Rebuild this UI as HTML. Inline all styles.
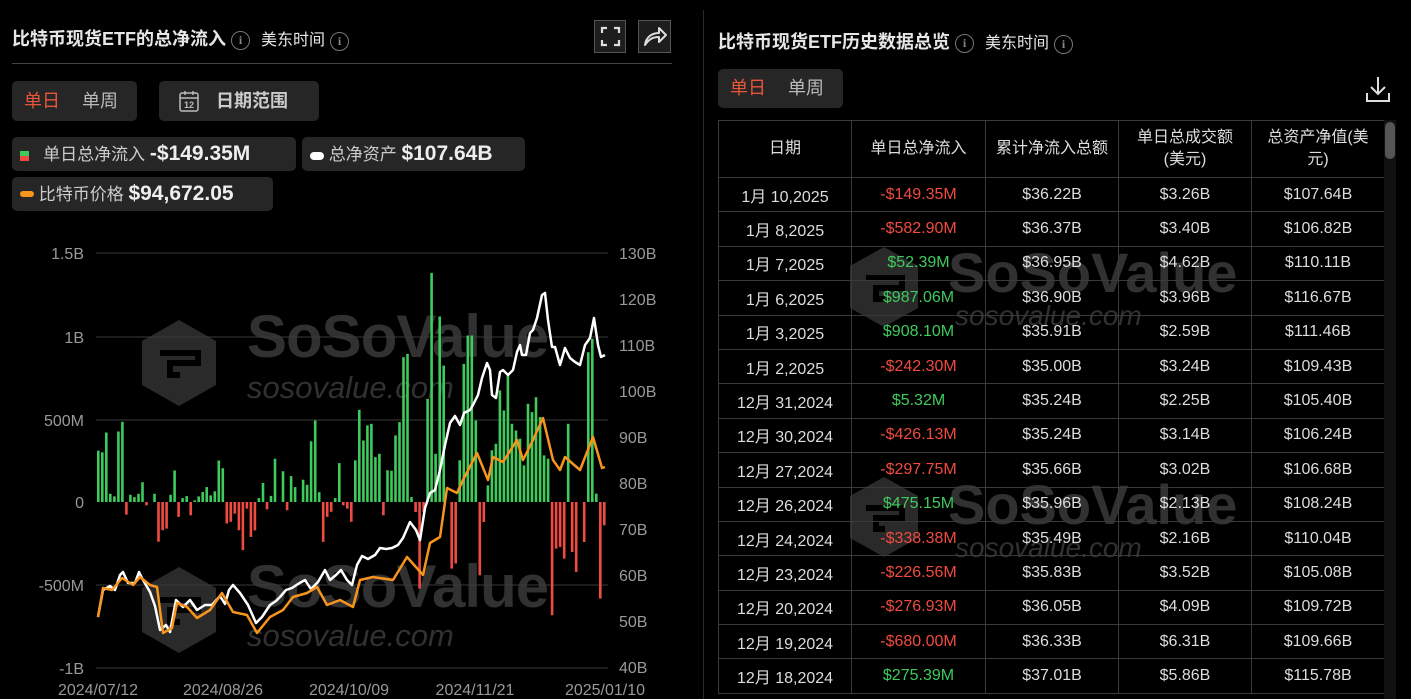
<!DOCTYPE html>
<html><head><meta charset="utf-8">
<style>
*{margin:0;padding:0;box-sizing:border-box}
body{width:1411px;height:699px;background:#000;overflow:hidden;position:relative;font-family:"Liberation Sans","Noto Sans CJK SC",sans-serif;color:#ddd}
.a{position:absolute}
.t{font-size:18px;font-weight:bold;color:#e6e6e6;white-space:nowrap}
.s{font-size:16px;color:#e6e6e6;white-space:nowrap}
.i{display:inline-block;width:19px;height:19px;border:1.5px solid #777;border-radius:50%;color:#888;font-size:12px;text-align:center;line-height:16px;font-family:"Liberation Serif",serif}
.box{background:#262626;border-radius:5px}
.chip{background:#262626;border-radius:5px;height:34px;font-size:17px;color:#ccc;white-space:nowrap;line-height:34px;padding:0 8px}
.chip b{color:#eee;font-size:21px}
table{border-collapse:collapse;position:absolute;left:718px;top:120px;width:667px;font-size:16px;color:#ddd}
td{border:1px solid #3a3a3a;text-align:center;height:34.4px;white-space:nowrap}
tr:first-child td{height:57px;line-height:22px}
.r{color:#ef4b40}.g{color:#3fca5c}
.wm{position:absolute;color:rgba(90,90,90,.55);font-weight:bold;white-space:nowrap}
</style></head><body>
<div class="a t" style="left:12px;top:25px">比特币现货ETF的总净流入 <span class="i" style="vertical-align:1px">i</span> <span class="s" style="font-weight:normal;margin-left:6px">美东时间</span> <span class="i">i</span></div>
<div class="a" style="left:594px;top:20px;width:32px;height:33px;border:1px solid #555;background:#1d1d1d"><svg width="30" height="31"><path d="M7 12V7h5M19 7h5v5M24 19v5h-5M12 24H7v-5" stroke="#ddd" stroke-width="2.2" fill="none"/></svg></div>
<div class="a" style="left:638px;top:20px;width:33px;height:33px;border:1px solid #555;background:#1d1d1d"><svg width="31" height="31"><path d="M6 24c1-8 7-12 14-12V7l7 7-7 7v-5c-6 0-10 2-14 8z" stroke="#ddd" stroke-width="2" fill="none" stroke-linejoin="round"/></svg></div>
<div class="a" style="left:12px;top:63px;width:660px;height:1px;background:#444"></div>
<div class="a" style="left:703px;top:10px;width:1px;height:689px;background:#2a2a2a"></div>
<div class="a box" style="left:12px;top:81px;width:125px;height:40px;font-size:18px;line-height:40px"><span style="color:#e8553a;margin-left:12px">单日</span><span style="color:#bbb;margin-left:22px">单周</span></div>
<div class="a box" style="left:159px;top:81px;width:160px;height:40px;font-size:18px;line-height:40px;font-weight:bold;color:#ccc"><svg class="a" style="left:19px;top:9px" width="22" height="22"><rect x="2" y="3" width="18" height="18" rx="2" stroke="#bbb" stroke-width="1.5" fill="none"/><path d="M2 8h18M7 1v4M15 1v4" stroke="#bbb" stroke-width="1.5"/><text x="11" y="18" font-size="9" fill="#bbb" text-anchor="middle">12</text></svg><span style="margin-left:57px">日期范围</span></div>
<div class="a chip" style="left:12px;top:137px;width:284px"><span style="display:inline-block;width:9px;height:10px;background:linear-gradient(#3fca5c 50%,#ef4b40 50%);vertical-align:-1px"></span>&nbsp;&nbsp; 单日总净流入 <b>-$149.35M</b></div>
<div class="a chip" style="left:302px;top:137px;width:223px"><span style="display:inline-block;width:14px;height:8px;background:#fff;border-radius:4px"></span> 总净资产 <b>$107.64B</b></div>
<div class="a chip" style="left:12px;top:177px;width:261px"><span style="display:inline-block;width:14px;height:6px;background:#f7941d;border-radius:3px;vertical-align:3px"></span> 比特币价格 <b>$94,672.05</b></div>
<div class="wm" style="left:140px;top:318px"><svg width="78" height="90"><path d="M39 2 76 23v44L39 88 2 67V23z" fill="rgba(70,70,70,.6)"/><path d="M20 35h38v10H30v12h10" stroke="#000" stroke-width="6" fill="none"/></svg></div>
<div class="wm" style="left:247px;top:302px;font-size:60px;letter-spacing:-1px">SoSoValue</div>
<div class="wm" style="left:247px;top:370px;font-size:31px;font-weight:normal;font-style:italic">sosovalue.com</div>
<div class="wm" style="left:140px;top:565px"><svg width="78" height="90"><path d="M39 2 76 23v44L39 88 2 67V23z" fill="rgba(70,70,70,.6)"/><path d="M20 35h38v10H30v12h10" stroke="#000" stroke-width="6" fill="none"/></svg></div>
<div class="wm" style="left:247px;top:552px;font-size:60px;letter-spacing:-1px">SoSoValue</div>
<div class="wm" style="left:247px;top:618px;font-size:31px;font-weight:normal;font-style:italic">sosovalue.com</div>
<svg class="a" style="left:0;top:0" width="700" height="699">
<g stroke="#3a3a3a" stroke-width="1"><line x1="96" x2="608" y1="253" y2="253"/><line x1="96" x2="608" y1="337" y2="337"/><line x1="96" x2="608" y1="420" y2="420"/><line x1="96" x2="608" y1="585" y2="585"/><line x1="96" x2="608" y1="668" y2="668"/></g>
<g fill="#999" font-size="16" font-family="Liberation Sans" text-anchor="end"><text x="84" y="259">1.5B</text><text x="84" y="343">1B</text><text x="84" y="426">500M</text><text x="84" y="508">0</text><text x="84" y="591">-500M</text><text x="84" y="674">-1B</text></g>
<g fill="#999" font-size="16" font-family="Liberation Sans"><text x="619" y="259">130B</text><text x="619" y="305">120B</text><text x="619" y="351">110B</text><text x="619" y="397">100B</text><text x="619" y="443">90B</text><text x="619" y="489">80B</text><text x="619" y="535">70B</text><text x="619" y="581">60B</text><text x="619" y="627">50B</text><text x="619" y="673">40B</text></g>
<g fill="#999" font-size="16" font-family="Liberation Sans" text-anchor="middle"><text x="98" y="695">2024/07/12</text><text x="223" y="695">2024/08/26</text><text x="349" y="695">2024/10/09</text><text x="475" y="695">2024/11/21</text><text x="605" y="695">2025/01/10</text></g>
<g id="bars"></g>
<polyline id="wl" fill="none" stroke="#fff" stroke-width="2.5" stroke-linejoin="round"/>
<polyline id="ol" fill="none" stroke="#f7941d" stroke-width="2.5" stroke-linejoin="round"/>
</svg>
<script>
var v=[313,303,424,50,34,430,489,-77,44,30,50,121,-20,0,50,-242,-172,-162,44,192,-91,24,36,-81,10,34,61,91,40,65,253,206,-131,-121,-71,-172,-293,-40,
-213,-173,24,116,-45,37,264,0,187,-50,158,91,0,136,105,370,497,60,-243,-91,-60,24,237,-20,-40,-121,254,562,375,467,477,274,294,-81,193,191,406,487,883,903,30,-61,-528,-60,629,1397,294,1131,832,
0,-406,-375,254,842,1015,1015,497,-447,-122,101,315,355,680,558,771,477,436,386,223,599,548,639,518,284,264,-690,-284,-274,-345,477,-305,-426,0,-244,913,995,51,-589,-142];
var n=v.length,x0=97,w=4.016,s="",k=82/500;
for(var i=0;i<n;i++){var h=v[i]*k;if(!h)continue;var x=x0+i*w;s+='<rect x="'+x.toFixed(1)+'" width="2.6" y="'+(h>0?502-h:502).toFixed(1)+'" height="'+Math.abs(h).toFixed(1)+'" fill="'+(h>0?'#3fca5c':'#ef4b40')+'"/>';}
document.getElementById('bars').innerHTML=s;
document.getElementById('wl').setAttribute('points',"98,617 103,590 110,586 115,590 120,575 123,572 128,583 135,583 139,572 143,580 150,592 155,606 160,630 166,625 170,632 176,600 183,607 190,600 197,610 205,605 212,605 220,596 225,604 229,590 233,585 240,593 248,605 256,623 262,617 270,605 276,601 280,597 286,590 292,588 298,584 305,580 311,589 318,582 325,570 330,580 336,575 341,570 347,580 352,585 357,565 362,556 368,559 375,555 380,548 386,549 392,548 398,545 403,538 410,522 416,530 420,540 425,508 430,493 435,490 440,470 445,445 450,423 455,416 460,425 464,413 470,410 473,405 478,395 482,378 487,363 490,370 492,395 496,398 500,372 503,370 508,375 513,370 517,352 520,345 522,355 526,355 530,333 533,330 537,318 542,295 545,293 548,320 552,347 555,347 560,365 565,348 570,358 575,362 580,365 585,345 590,338 594,318 598,345 601,357 605,355");
document.getElementById('ol').setAttribute('points',"98,617 103,588 112,590 122,578 133,585 140,577 150,585 157,587 163,633 172,628 177,603 187,607 197,618 210,610 222,593 233,612 247,615 257,633 270,617 283,610 293,597 307,593 317,587 327,605 340,600 353,607 360,580 373,577 393,580 407,557 423,575 430,543 440,537 447,488 457,493 463,480 477,453 488,480 493,457 503,462 517,440 523,460 533,440 543,418 553,460 560,470 565,457 580,470 593,437 602,468 605,467");
</script>
<div class="a t" style="left:718px;top:28px">比特币现货ETF历史数据总览 <span class="i" style="vertical-align:1px">i</span> <span class="s" style="font-weight:normal;margin-left:6px">美东时间</span> <span class="i">i</span></div>
<div class="a box" style="left:718px;top:69px;width:125px;height:39px;font-size:18px;line-height:39px"><span style="color:#e8553a;margin-left:12px">单日</span><span style="color:#bbb;margin-left:22px">单周</span></div>
<svg class="a" style="left:1364px;top:75px" width="28" height="28"><path d="M14 2v17M7 12l7 7 7-7M3 18v8h22v-8" stroke="#ddd" stroke-width="2" fill="none"/></svg>
<div class="wm" style="left:848px;top:245px"><svg width="72" height="84"><path d="M36 2 70 21v42L36 82 2 63V21z" fill="rgba(70,70,70,.6)"/><path d="M18 33h36v10H28v11h9" stroke="#000" stroke-width="6" fill="none"/></svg></div>
<div class="wm" style="left:948px;top:240px;font-size:56px">SoSoValue</div>
<div class="wm" style="left:955px;top:300px;font-size:28px;font-weight:normal;font-style:italic">sosovalue.com</div>
<div class="wm" style="left:848px;top:475px"><svg width="72" height="84"><path d="M36 2 70 21v42L36 82 2 63V21z" fill="rgba(70,70,70,.6)"/><path d="M18 33h36v10H28v11h9" stroke="#000" stroke-width="6" fill="none"/></svg></div>
<div class="wm" style="left:948px;top:472px;font-size:56px">SoSoValue</div>
<div class="wm" style="left:955px;top:532px;font-size:28px;font-weight:normal;font-style:italic">sosovalue.com</div>
<table>
<tr><td style="width:133px">日期</td><td style="width:134px">单日总净流入</td><td style="width:133px">累计净流入总额</td><td style="width:133px">单日总成交额<br>(美元)</td><td>总资产净值(美<br>元)</td></tr>
<tr><td>1月 10,2025</td><td class="r">-$149.35M</td><td>$36.22B</td><td>$3.26B</td><td>$107.64B</td></tr>
<tr><td>1月 8,2025</td><td class="r">-$582.90M</td><td>$36.37B</td><td>$3.40B</td><td>$106.82B</td></tr>
<tr><td>1月 7,2025</td><td class="g">$52.39M</td><td>$36.95B</td><td>$4.62B</td><td>$110.11B</td></tr>
<tr><td>1月 6,2025</td><td class="g">$987.06M</td><td>$36.90B</td><td>$3.96B</td><td>$116.67B</td></tr>
<tr><td>1月 3,2025</td><td class="g">$908.10M</td><td>$35.91B</td><td>$2.59B</td><td>$111.46B</td></tr>
<tr><td>1月 2,2025</td><td class="r">-$242.30M</td><td>$35.00B</td><td>$3.24B</td><td>$109.43B</td></tr>
<tr><td>12月 31,2024</td><td class="g">$5.32M</td><td>$35.24B</td><td>$2.25B</td><td>$105.40B</td></tr>
<tr><td>12月 30,2024</td><td class="r">-$426.13M</td><td>$35.24B</td><td>$3.14B</td><td>$106.24B</td></tr>
<tr><td>12月 27,2024</td><td class="r">-$297.75M</td><td>$35.66B</td><td>$3.02B</td><td>$106.68B</td></tr>
<tr><td>12月 26,2024</td><td class="g">$475.15M</td><td>$35.96B</td><td>$2.13B</td><td>$108.24B</td></tr>
<tr><td>12月 24,2024</td><td class="r">-$338.38M</td><td>$35.49B</td><td>$2.16B</td><td>$110.04B</td></tr>
<tr><td>12月 23,2024</td><td class="r">-$226.56M</td><td>$35.83B</td><td>$3.52B</td><td>$105.08B</td></tr>
<tr><td>12月 20,2024</td><td class="r">-$276.93M</td><td>$36.05B</td><td>$4.09B</td><td>$109.72B</td></tr>
<tr><td>12月 19,2024</td><td class="r">-$680.00M</td><td>$36.33B</td><td>$6.31B</td><td>$109.66B</td></tr>
<tr><td>12月 18,2024</td><td class="g">$275.39M</td><td>$37.01B</td><td>$5.86B</td><td>$115.78B</td></tr>
</table>
<div class="a" style="left:1384px;top:120px;width:12px;height:579px;background:#111"></div>
<div class="a" style="left:1385px;top:122px;width:10px;height:37px;background:#555;border-radius:5px"></div>
</body></html>
